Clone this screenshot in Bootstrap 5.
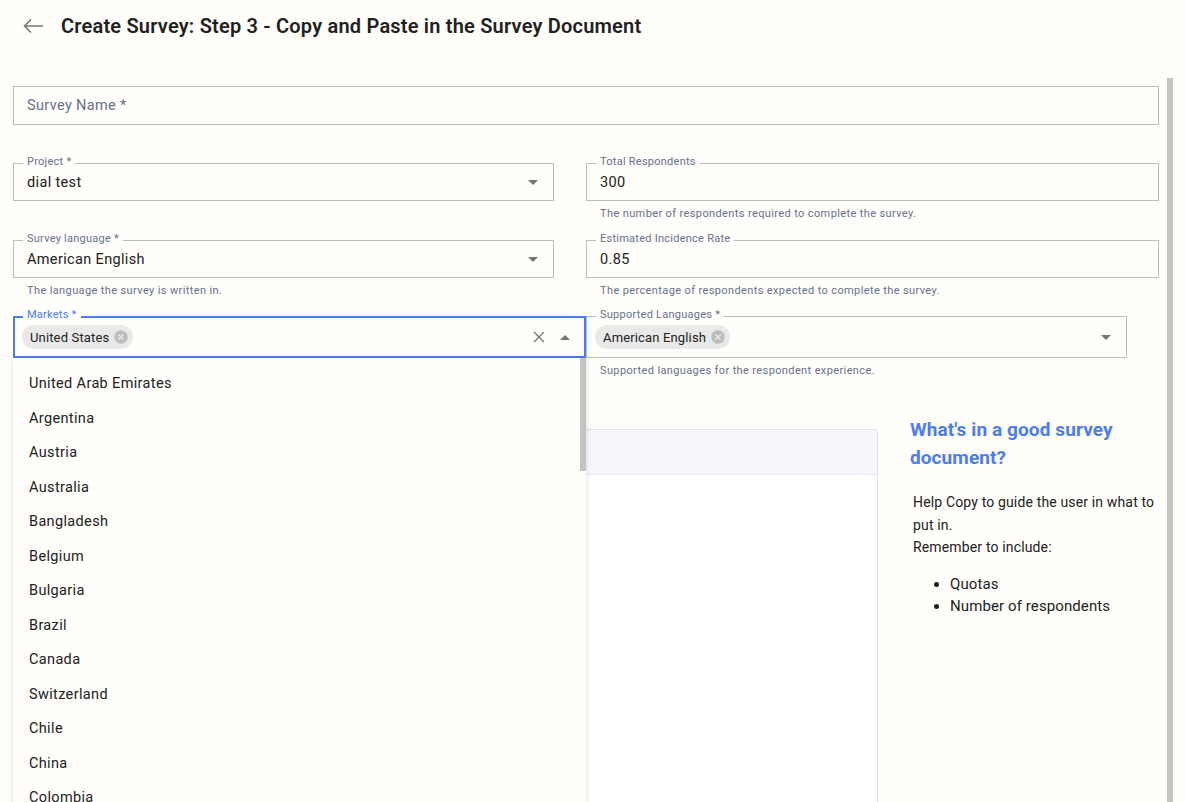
<!doctype html>
<html lang="en">
<head>
<meta charset="utf-8">
<title>Create Survey</title>
<link href="https://cdn.jsdelivr.net/npm/bootstrap@5.3.0/dist/css/bootstrap.min.css" rel="stylesheet">
<style>
html,body{height:100%;overflow:hidden}
body{background:#fffefb;font-family:Roboto,"Liberation Sans",sans-serif;font-size:14px;color:#212121}
.shell{height:802px;overflow:hidden;position:relative}
.topbar{height:52px;padding-left:22px;gap:16px}
.topbar h1{font-size:20px;font-weight:600;margin:0;color:#212121;line-height:1;letter-spacing:.2px}
.sheet{padding:34px 26px 0 13px}
.thumb{position:absolute;left:1167px;top:78px;width:6px;bottom:0;background:#c4c4c4}
.outline{position:relative;height:38px;border:1px solid #bdbdbd;border-radius:0;background:transparent;padding:0 13px;font-size:14.5px;letter-spacing:.35px;color:#212121;display:flex;align-items:center}
div.outline{padding-top:1px}
.outline:focus{box-shadow:none;border-color:#bdbdbd;background:transparent}
.outline::placeholder{color:#66708c;opacity:1}
.outline.namefield{height:39px;margin-bottom:38px}
.tag{position:absolute;z-index:1;left:10px;top:-7px;background:#fffefb;padding:0 4px;font-size:11px;line-height:12px;letter-spacing:.25px;color:#66708c;white-space:nowrap}
.outline>.tag{left:9px;top:-8px}
.note{font-size:11px;line-height:12px;letter-spacing:.38px;color:#66708c;padding:7px 0 0 14px;height:39px;margin:0}
.note.free{height:auto}
.cell-a{width:541px;flex:none}
.cell-b{width:573px;flex:none}
.gap-wide{gap:32px}
.caret-sp{margin-right:2px}
.caret-end{margin-right:7px}
.row-tight{margin-top:-1px}
div.tall{height:42px;padding:0 8px 0 8px}
div.tall.on{border:2px solid #4a7bf7;padding:0 7px 0 7px;z-index:3}
.tall.on>.tag{color:#4a7bf7;left:8px;top:-9px}
.pill{display:inline-flex;align-items:center;gap:4px;height:24px;border-radius:12px;background:#e9e9e9;padding:1px 4px 0 8px;font-size:13px;letter-spacing:.15px;color:#212121}
.pill svg{display:block;margin-top:-1px}
.push{margin-left:auto}
.tail{margin-left:auto;display:flex;align-items:center;gap:15px;margin-right:7px}
.menu-list{top:calc(100% + 2px)!important;left:-2px!important;right:auto;width:573px;height:470px;margin:0!important;padding:9px 0 0;border:0;border-radius:0;background:#fffefb;box-shadow:0 2px 6px rgba(40,50,80,.16);overflow:hidden}
.menu-list .dropdown-item{padding:0 16px;height:34.5px;line-height:34.5px;color:#212121;letter-spacing:.35px;font-size:14.5px}
.menu-thumb{position:absolute;right:0;top:0;width:6px;height:113px;background:#c4c4c4}
.lower{margin-top:52px;gap:32px}
.doc{width:865px;flex:none;height:600px;border:1px solid #dfe2ec;border-radius:4px;background:#fff}
.doc .card-header{height:45px;background:#f7f8fd;border-bottom:1px solid #e9ebf3}
.side{width:249px;flex:none;margin-top:-13px}
.side h2{font-size:19px;line-height:28px;font-weight:700;letter-spacing:.1px;color:#4a7bf7;margin:0 0 19px}
.side p{font-size:14px;line-height:22.5px;color:#212121;letter-spacing:.15px;margin:0 0 0 3px}
.side li{font-size:15px;line-height:22px;color:#212121;letter-spacing:.1px}
.side ul{margin:14px 0 0;padding-left:40px}
</style>
</head>
<body>
<div class="shell">
  <header class="topbar d-flex align-items-center">
    <svg width="23" height="16" viewBox="0 0 23 16" fill="none" stroke="#757575" stroke-width="1.6"><path d="M21 8H2.500M9 1.500L2.500 8l6.500 6.500"/></svg>
    <h1>Create Survey: Step 3 - Copy and Paste in the Survey Document</h1>
  </header>
  <form class="sheet">
    <input class="form-control outline namefield" placeholder="Survey Name *">

    <div class="d-flex gap-wide">
      <div class="cell-a">
        <div class="outline"><span class="tag">Project *</span>dial test
          <svg class="push caret-sp" width="10" height="5" viewBox="0 0 10 5" fill="#757575"><path d="M0 0h10L5 5z"/></svg></div>
      </div>
      <div class="cell-b">
        <div class="position-relative"><span class="tag">Total Respondents</span><input class="form-control outline" value="300"></div>
        <p class="note">The number of respondents required to complete the survey.</p>
      </div>
    </div>

    <div class="d-flex gap-wide">
      <div class="cell-a">
        <div class="outline"><span class="tag">Survey language *</span>American English
          <svg class="push caret-sp" width="10" height="5" viewBox="0 0 10 5" fill="#757575"><path d="M0 0h10L5 5z"/></svg></div>
        <p class="note">The language the survey is written in.</p>
      </div>
      <div class="cell-b">
        <div class="position-relative"><span class="tag">Estimated Incidence Rate</span><input class="form-control outline" value="0.85"></div>
        <p class="note">The percentage of respondents expected to complete the survey.</p>
      </div>
    </div>

    <div class="d-flex row-tight">
      <div class="cell-b">
        <div class="outline tall on"><span class="tag">Markets *</span>
          <span class="pill">United States
            <svg width="16" height="16" viewBox="0 0 24 24" fill="#bdbdbd"><path d="M12 2C6.470 2 2 6.470 2 12s4.470 10 10 10 10-4.470 10-10S17.530 2 12 2zm5 13.590L15.590 17 12 13.410 8.410 17 7 15.590 10.590 12 7 8.410 8.410 7 12 10.590 15.590 7 17 8.410 13.410 12 17 15.590z"/></svg>
          </span>
          <span class="tail">
            <svg width="12" height="12" viewBox="0 0 12 12" stroke="#757575" stroke-width="1.300" fill="none"><path d="M1 1l10 10M11 1L1 11"/></svg>
            <svg width="10" height="5" viewBox="0 0 10 5" fill="#757575"><path d="M0 5h10L5 0z"/></svg>
          </span>
          <div class="dropdown-menu show menu-list">
            <a class="dropdown-item" href="#">United Arab Emirates</a>
            <a class="dropdown-item" href="#">Argentina</a>
            <a class="dropdown-item" href="#">Austria</a>
            <a class="dropdown-item" href="#">Australia</a>
            <a class="dropdown-item" href="#">Bangladesh</a>
            <a class="dropdown-item" href="#">Belgium</a>
            <a class="dropdown-item" href="#">Bulgaria</a>
            <a class="dropdown-item" href="#">Brazil</a>
            <a class="dropdown-item" href="#">Canada</a>
            <a class="dropdown-item" href="#">Switzerland</a>
            <a class="dropdown-item" href="#">Chile</a>
            <a class="dropdown-item" href="#">China</a>
            <a class="dropdown-item" href="#">Colombia</a>
            <span class="menu-thumb"></span>
          </div>
        </div>
      </div>
      <div class="cell-a">
        <div class="outline tall"><span class="tag">Supported Languages *</span>
          <span class="pill">American English
            <svg width="16" height="16" viewBox="0 0 24 24" fill="#bdbdbd"><path d="M12 2C6.470 2 2 6.470 2 12s4.470 10 10 10 10-4.470 10-10S17.530 2 12 2zm5 13.590L15.590 17 12 13.410 8.410 17 7 15.590 10.590 12 7 8.410 8.410 7 12 10.590 15.590 7 17 8.410 13.410 12 17 15.590z"/></svg>
          </span>
          <svg class="push caret-end" width="10" height="5" viewBox="0 0 10 5" fill="#757575"><path d="M0 0h10L5 5z"/></svg>
        </div>
        <p class="note free">Supported languages for the respondent experience.</p>
      </div>
    </div>

    <div class="d-flex lower">
      <div class="card doc">
        <div class="card-header"></div>
        <div class="card-body"></div>
      </div>
      <aside class="side">
        <h2>What's in a good survey document?</h2>
        <p>Help Copy to guide the user in what to put in.</p>
        <p>Remember to include:</p>
        <ul>
          <li>Quotas</li>
          <li>Number of respondents</li>
        </ul>
      </aside>
    </div>
  </form>
  <div class="thumb"></div>
</div>
<script src="https://cdn.jsdelivr.net/npm/bootstrap@5.3.0/dist/js/bootstrap.bundle.min.js"></script>
</body>
</html>
